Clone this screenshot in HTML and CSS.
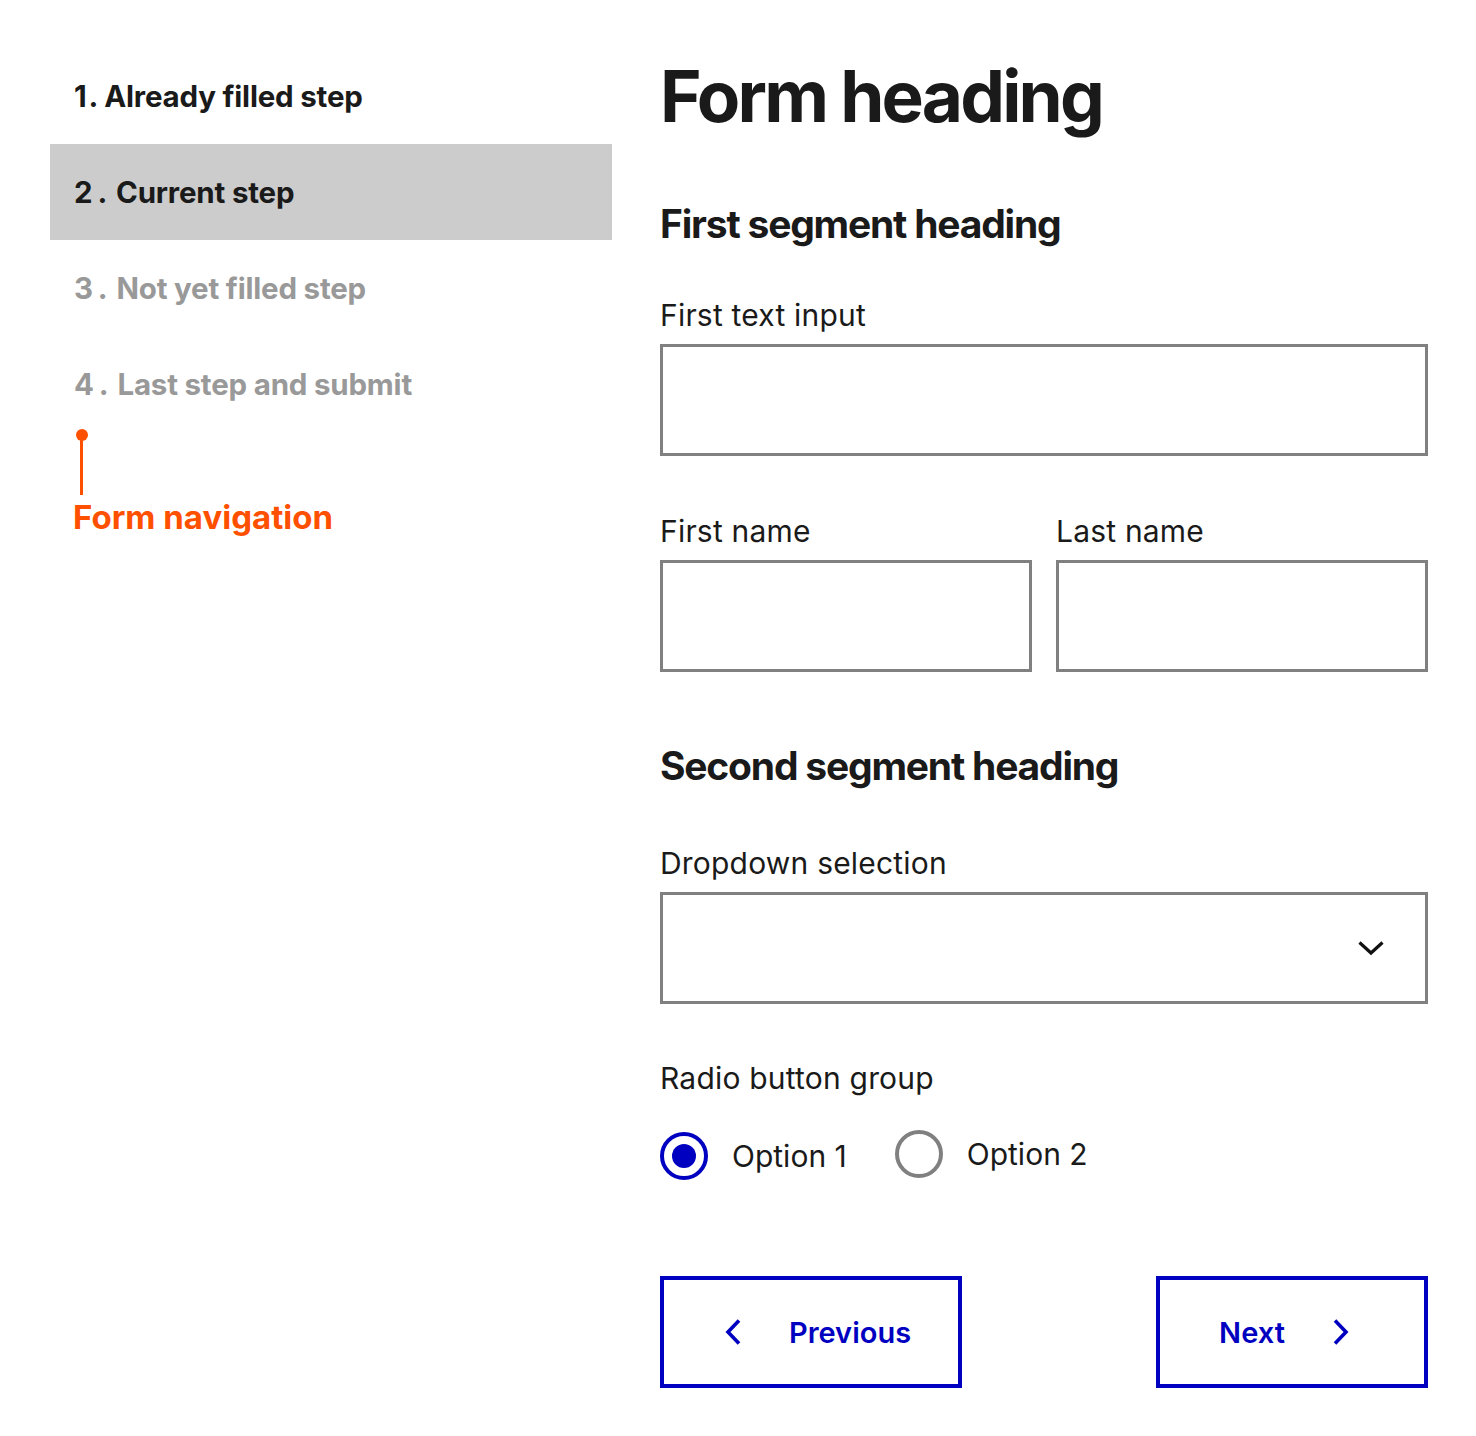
FILE: index.html
```html
<!DOCTYPE html>
<html lang="en">
<head>
<meta charset="utf-8">
<title>Form</title>
<link rel="stylesheet" href="styles.css">
</head>
<body>
<div class="page">
  <nav class="steps">
    <ol class="step-list">
      <li class="step step--done"><span class="step-num">1</span><span class="step-dot">.</span>Already filled step</li>
      <li class="step step--current"><span class="step-num">2</span><span class="step-dot step-dot--wide">.</span>Current step</li>
      <li class="step step--todo"><span class="step-num">3</span><span class="step-dot step-dot--wide">.</span>Not yet filled step</li>
      <li class="step step--todo"><span class="step-num">4</span><span class="step-dot step-dot--wide">.</span>Last step and submit</li>
    </ol>
    <div class="annotation">
      <span class="annotation-pin"></span>
      <span class="annotation-label">Form navigation</span>
    </div>
  </nav>
  <main class="form">
    <h1 class="form-title">Form heading</h1>
    <section class="segment">
      <h2 class="segment-title">First segment heading</h2>
      <div class="field">
        <label class="field-label">First text input</label>
        <div class="input"></div>
      </div>
      <div class="field-row">
        <div class="field">
          <label class="field-label">First name</label>
          <div class="input"></div>
        </div>
        <div class="field">
          <label class="field-label">Last name</label>
          <div class="input"></div>
        </div>
      </div>
    </section>
    <section class="segment segment--second">
      <h2 class="segment-title">Second segment heading</h2>
      <div class="field">
        <label class="field-label">Dropdown selection</label>
        <div class="input select">
          <svg class="select-chevron" width="28" height="16" viewBox="0 0 28 16"><path d="M2.5 2.5 L14 13 L25.5 2.5" fill="none" stroke="#111" stroke-width="3.2"/></svg>
        </div>
      </div>
      <div class="field field--radio">
        <span class="field-label">Radio button group</span>
        <div class="radio-row">
          <span class="radio radio--checked"><span class="radio-circle"><span class="radio-dot"></span></span>Option 1</span>
          <span class="radio radio--off"><span class="radio-circle"></span>Option 2</span>
        </div>
      </div>
    </section>
    <div class="actions">
      <button class="btn btn--prev">
        <svg class="btn-icon" width="20" height="28" viewBox="0 0 20 28"><path d="M16 2.5 L5 14 L16 25.5" fill="none" stroke="#0000c0" stroke-width="3.6"/></svg>
        <span>Previous</span>
      </button>
      <button class="btn btn--next">
        <span>Next</span>
        <svg class="btn-icon" width="20" height="28" viewBox="0 0 20 28"><path d="M4 2.5 L15 14 L4 25.5" fill="none" stroke="#0000c0" stroke-width="3.6"/></svg>
      </button>
    </div>
  </main>
</div>
</body>
</html>
```

FILE: styles.css
```css
* { box-sizing: border-box; }
html, body { margin: 0; padding: 0; background: #fff; }
body {
  font-family: Inter, "Liberation Sans", sans-serif;
  color: #1a1a1a;
}
.page {
  display: grid;
  grid-template-columns: 562px 768px;
  column-gap: 48px;
  padding: 48px 48px 0 50px;
}
.step-list { list-style: none; margin: 0; padding: 0; }
.step {
  height: 96px;
  display: flex;
  align-items: center;
  padding-left: 24px;
  font-size: 29.5px;
  font-weight: 700;
  letter-spacing: -0.2px;
}
.step-dot { margin: 0 6px 0 2px; }
.step-dot--wide { margin: 0 9px 0 5px; }
.step--done { color: #1a1a1a; }
.step--current { background: #cccccc; color: #1a1a1a; }
.step--todo { color: #999999; }

.annotation {
  display: flex;
  flex-direction: column;
  align-items: flex-start;
  padding-left: 23px;
  margin-top: -3px;
}
.annotation-pin {
  position: relative;
  width: 3px;
  height: 60px;
  margin-left: 7px;
  margin-top: 6px;
  background: #ff5000;
}
.annotation-pin::before {
  content: "";
  position: absolute;
  left: -4px;
  top: -6px;
  width: 12px;
  height: 12px;
  border-radius: 50%;
  background: #ff5000;
}
.annotation-label {
  color: #ff5000;
  font-size: 33px;
  font-weight: 700;
  line-height: 40px;
  margin-top: 2px;
}

.form-title {
  margin: 8px 0 0;
  font-size: 71px;
  line-height: 80px;
  font-weight: 700;
  letter-spacing: -2.8px;
}
.segment-title {
  margin: 0;
  font-size: 39px;
  line-height: 48px;
  font-weight: 700;
  letter-spacing: -1.2px;
}
.segment { padding-top: 64px; }
.segment--second { padding-top: 70px; }
.field { display: flex; flex-direction: column; margin-top: 49px; }
.field-label {
  font-size: 30px;
  line-height: 36px;
  letter-spacing: 0.2px;
  margin-bottom: 11px;
}
.input {
  height: 112px;
  border: 3px solid #808080;
  background: #fff;
}
.field-row {
  display: grid;
  grid-template-columns: 1fr 1fr;
  column-gap: 24px;
}
.field-row .field { margin-top: 57px; }
.segment--second .field { margin-top: 55px; }
.select {
  display: flex;
  align-items: center;
  justify-content: flex-end;
  padding-right: 40px;
}
.segment--second .field--radio { margin-top: 56px; }
.field--radio .field-label { margin-bottom: 0; }
.radio-row {
  display: flex;
  align-items: center;
  gap: 48px;
  margin-top: 36px;
}
.radio {
  display: flex;
  align-items: center;
  gap: 24px;
  font-size: 30px;
  line-height: 36px;
}
.radio-circle {
  width: 48px;
  height: 48px;
  border-radius: 50%;
  border: 4px solid #808080;
  display: flex;
  align-items: center;
  justify-content: center;
}
.radio--checked .radio-circle { border-color: #0000c0; }
.radio--off { position: relative; top: -2px; }
.radio-dot {
  width: 24px;
  height: 24px;
  border-radius: 50%;
  background: #0000c0;
}
.actions {
  display: flex;
  justify-content: space-between;
  margin-top: 96px;
}
.btn {
  height: 112px;
  border: 4px solid #0000c0;
  background: #fff;
  color: #0000c0;
  font-family: inherit;
  font-size: 29px;
  font-weight: 600;
  display: flex;
  align-items: center;
  justify-content: center;
  gap: 46px;
  padding: 0;
}
.btn--prev { width: 302px; padding-left: 12px; }
.btn--next { width: 272px; padding-right: 14px; }
```
